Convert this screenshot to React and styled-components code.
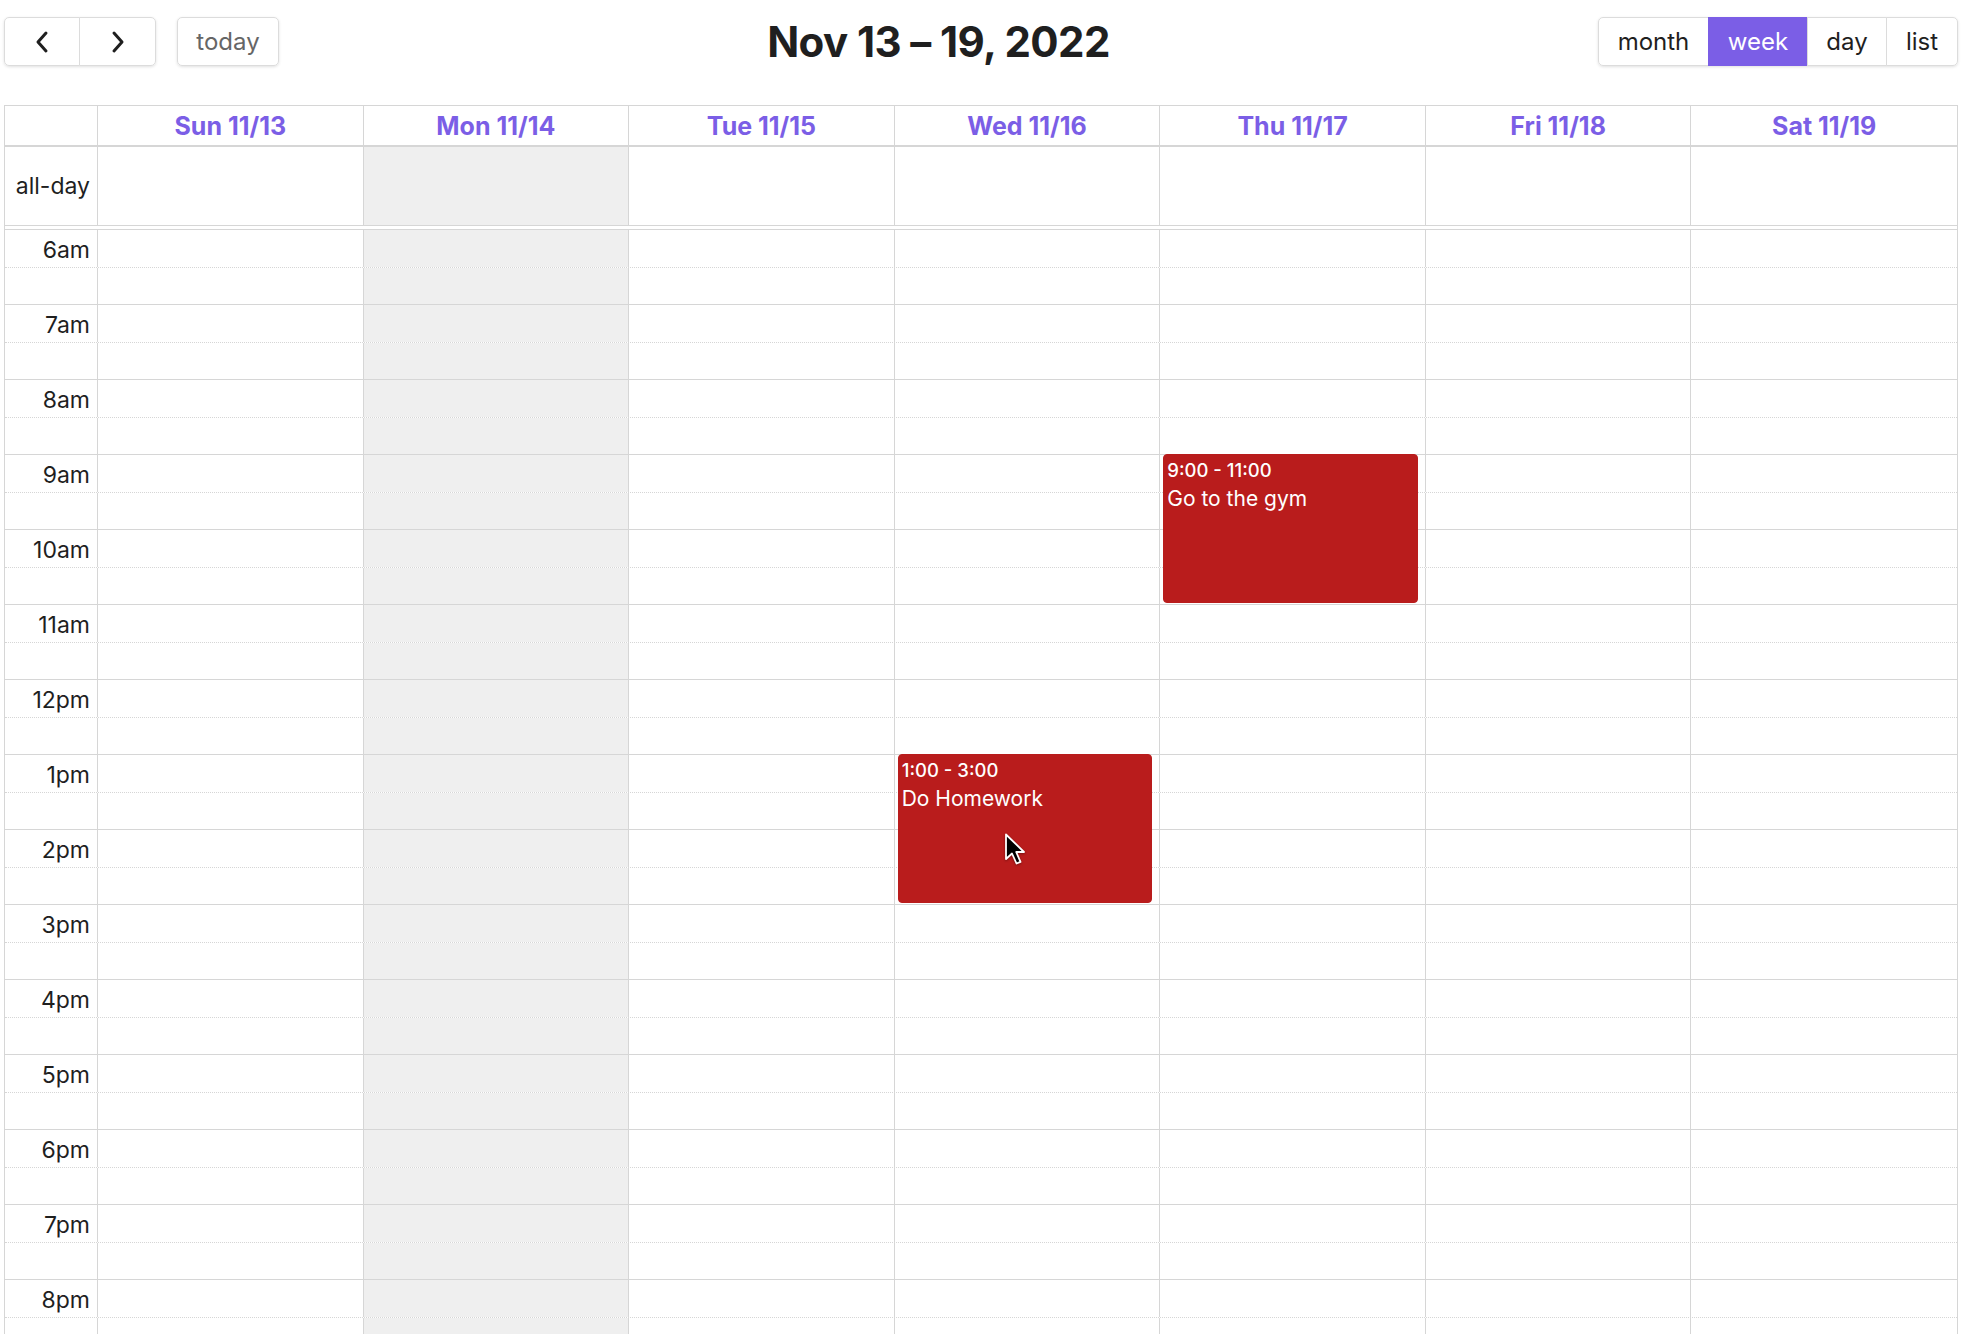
import React from "react";
import styled, { createGlobalStyle } from "styled-components";

const HOUR = 75;
const FIRST_HOUR = 6;
const LINE = "#d6d6d6";

const DAYS = [
  { label: "Sun 11/13" },
  { label: "Mon 11/14", today: true },
  { label: "Tue 11/15" },
  { label: "Wed 11/16" },
  { label: "Thu 11/17" },
  { label: "Fri 11/18" },
  { label: "Sat 11/19" },
];

const HOURS = ["6am", "7am", "8am", "9am", "10am", "11am", "12pm", "1pm", "2pm", "3pm", "4pm", "5pm", "6pm", "7pm", "8pm"];

const EVENTS = [
  { day: 4, start: 9, end: 11, time: "9:00 - 11:00", title: "Go to the gym" },
  { day: 3, start: 13, end: 15, time: "1:00 - 3:00", title: "Do Homework" },
];

const GlobalStyle = createGlobalStyle`
  html, body {
    margin: 0;
    padding: 0;
    background: #fff;
    overflow: hidden;
  }
  body {
    font-family: Inter, "Noto Sans", "Liberation Sans", sans-serif;
    color: #222;
  }
`;

const Page = styled.div`
  height: 1334px;
  overflow: hidden;
  padding: 17px 12px 0 4px;
  box-sizing: border-box;
  position: relative;
`;

const Toolbar = styled.div`
  display: flex;
  align-items: center;
  justify-content: space-between;
  height: 49px;
  margin-bottom: 39px;
`;

const Chunk = styled.div`
  display: flex;
  align-items: center;
  gap: 21px;
`;

const Group = styled.div`
  display: flex;
  border-radius: 5px;
  box-shadow: 0 1px 3px rgba(0, 0, 0, 0.12);
`;

const Button = styled.button`
  height: 49px;
  width: ${(p) => p.$w}px;
  box-sizing: border-box;
  display: flex;
  align-items: center;
  justify-content: center;
  font-family: inherit;
  font-size: 24px;
  color: ${(p) => (p.$active ? "#fff" : p.$muted ? "#666" : "#1f1f1f")};
  background: ${(p) => (p.$active ? "#7b5ee6" : "#fff")};
  border: 1px solid ${(p) => (p.$active ? "#7b5ee6" : "#dcdcdc")};
  margin-left: -1px;
  padding: 0;
  border-radius: 0;

  &:first-child {
    margin-left: 0;
    border-radius: 5px 0 0 5px;
  }
  &:last-child {
    border-radius: 0 5px 5px 0;
  }
  &:only-child {
    border-radius: 5px;
  }
`;

const Title = styled.h2`
  margin: 0;
  font-size: 42px;
  font-weight: 700;
  letter-spacing: -0.6px;
  color: #1f1f1f;
`;

const Table = styled.div`
  border: 1px solid ${LINE};
  border-bottom: none;
`;

const Row = styled.div`
  display: grid;
  grid-template-columns: 93px repeat(7, 1fr);
  box-sizing: border-box;
`;

const HeaderRow = styled(Row)`
  height: 41px;
  border-bottom: 2px solid ${LINE};
`;

const HeaderCell = styled.div`
  display: flex;
  align-items: center;
  justify-content: center;
  font-size: 25px;
  font-weight: 700;
  color: #7b5ee6;
  border-right: 1px solid ${LINE};

  &:last-child {
    border-right: none;
  }
`;

const AllDayRow = styled(Row)`
  height: 79px;
  border-bottom: 1px solid ${LINE};
`;

const Cell = styled.div`
  border-right: 1px solid ${LINE};
  background: ${(p) => (p.$today ? "#efefef" : "transparent")};

  &:last-child {
    border-right: none;
  }
`;

const AxisLabel = styled.div`
  display: flex;
  align-items: ${(p) => (p.$center ? "center" : "flex-start")};
  justify-content: flex-end;
  padding: ${(p) => (p.$center ? "0 7px 0 0" : "5px 7px 0 0")};
  font-size: 23px;
  line-height: 30px;
  color: #1f1f1f;
  border-right: 1px solid ${LINE};
`;

const Divider = styled.div`
  height: 4px;
  box-sizing: border-box;
  border-bottom: 1px solid ${LINE};
`;

const Body = styled.div`
  position: relative;
`;

const SlotRow = styled(Row)`
  height: 37.5px;
  border-bottom: 1px ${(p) => (p.$half ? "dotted" : "solid")} ${LINE};
`;

const EventLayer = styled(Row)`
  position: absolute;
  inset: 0;
  pointer-events: none;
`;

const DayColumn = styled.div`
  position: relative;
`;

const Event = styled.div`
  position: absolute;
  left: 3px;
  right: 8px;
  box-sizing: border-box;
  padding: 2px 3px;
  background: #b91c1c;
  border: 1px solid #b91c1c;
  border-radius: 4px;
  color: #fff;
  overflow: hidden;
`;

const EventTime = styled.div`
  font-size: 18.5px;
  font-weight: 500;
  line-height: 26px;
`;

const EventTitle = styled.div`
  font-size: 21px;
  line-height: 32px;
`;

const Cursor = styled.svg`
  position: absolute;
  left: 1004px;
  top: 833px;
  filter: drop-shadow(0 1px 1px rgba(0, 0, 0, 0.35));
`;

const Chevron = ({ dir }) => (
  <svg width="16" height="24" viewBox="0 0 16 24" fill="none">
    <polyline
      points={dir === "left" ? "12,3 4,12 12,21" : "4,3 12,12 4,21"}
      stroke="#1f1f1f"
      strokeWidth="3"
      strokeLinecap="round"
      strokeLinejoin="round"
    />
  </svg>
);

const App = () => {
  return (
    <>
      <GlobalStyle />
      <Page>
        <Toolbar>
          <Chunk>
            <Group>
              <Button $w={76}><Chevron dir="left" /></Button>
              <Button $w={77}><Chevron dir="right" /></Button>
            </Group>
            <Group>
              <Button $w={102} $muted>today</Button>
            </Group>
          </Chunk>
          <Title>Nov 13 – 19, 2022</Title>
          <Group>
            <Button $w={111}>month</Button>
            <Button $w={100} $active>week</Button>
            <Button $w={80}>day</Button>
            <Button $w={72}>list</Button>
          </Group>
        </Toolbar>

        <Table>
          <HeaderRow>
            <HeaderCell />
            {DAYS.map((d) => (
              <HeaderCell key={d.label}>{d.label}</HeaderCell>
            ))}
          </HeaderRow>

          <AllDayRow>
            <AxisLabel $center>all-day</AxisLabel>
            {DAYS.map((d) => (
              <Cell key={d.label} $today={d.today} />
            ))}
          </AllDayRow>

          <Divider />

          <Body>
            {HOURS.map((h) => (
              <React.Fragment key={h}>
                <SlotRow $half>
                  <AxisLabel>{h}</AxisLabel>
                  {DAYS.map((d) => (
                    <Cell key={d.label} $today={d.today} />
                  ))}
                </SlotRow>
                <SlotRow>
                  <Cell />
                  {DAYS.map((d) => (
                    <Cell key={d.label} $today={d.today} />
                  ))}
                </SlotRow>
              </React.Fragment>
            ))}

            <EventLayer>
              <div />
              {DAYS.map((d, i) => (
                <DayColumn key={d.label}>
                  {EVENTS.filter((e) => e.day === i).map((e) => (
                    <Event
                      key={e.title}
                      style={{
                        top: (e.start - FIRST_HOUR) * HOUR - 1,
                        height: (e.end - e.start) * HOUR - 1,
                      }}
                    >
                      <EventTime>{e.time}</EventTime>
                      <EventTitle>{e.title}</EventTitle>
                    </Event>
                  ))}
                </DayColumn>
              ))}
            </EventLayer>
          </Body>
        </Table>

        <Cursor width="24" height="34" viewBox="0 0 24 34">
          <path
            d="M2 1.5 L2 26 L8 20.5 L12.5 30.5 L16.5 28.8 L12.2 19 L20 19 Z"
            fill="#000"
            stroke="#fff"
            strokeWidth="1.8"
            strokeLinejoin="round"
          />
        </Cursor>
      </Page>
    </>
  );
};

export default App;
